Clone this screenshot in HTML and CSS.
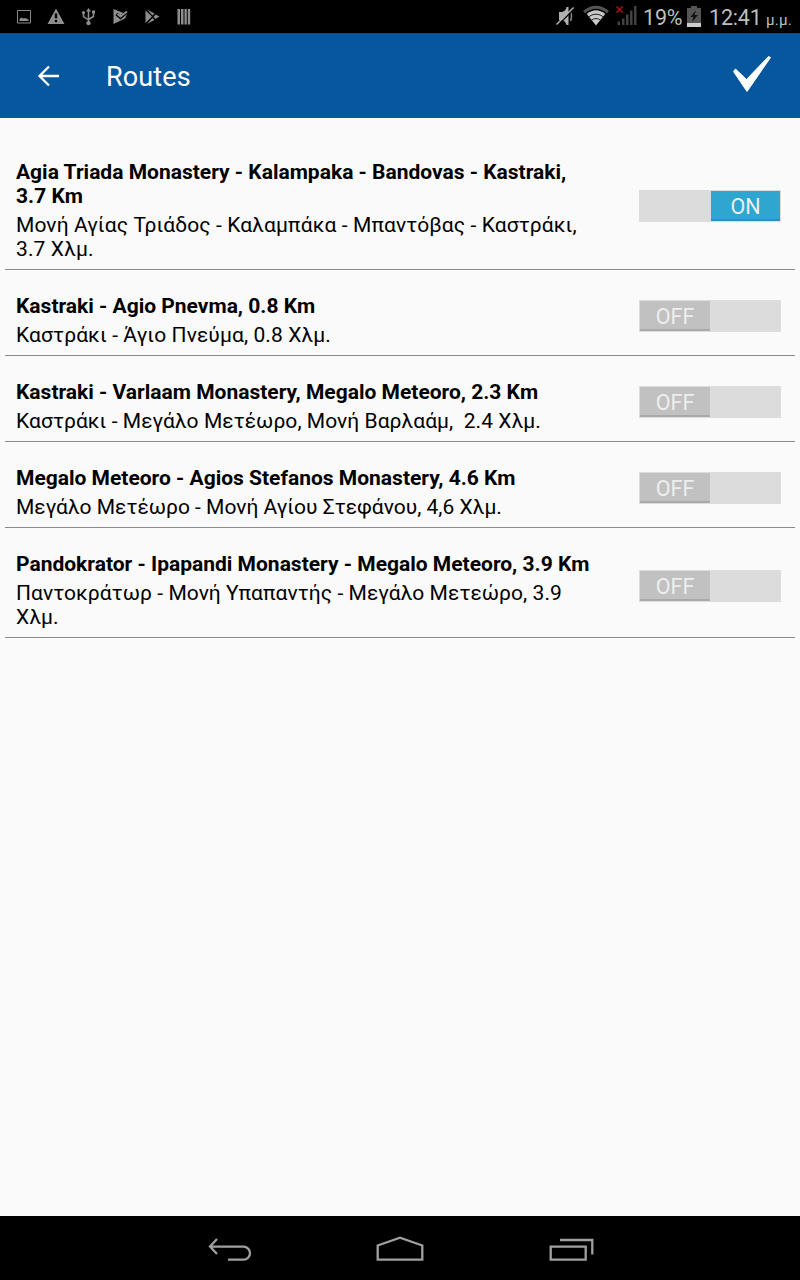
FILE: index.html
```html
<!DOCTYPE html>
<html lang="en">
<head>
  <meta charset="UTF-8" />
  <meta name="viewport" content="width=device-width, initial-scale=1.0" />
  <title>Routes</title>
  <link rel="stylesheet" href="styles.css">
</head>
<body>
  <div class="status-bar">
    <svg class="notifications" width="200" height="33" viewBox="0 0 200 33" fill="#8e8e8e">
      <path d="M17.500 10.500h13v12.500h-13z" fill="none" stroke="#8a8a8a" />
      <path d="M19.500 21v-2l2-1.500 2 1 1.500-.5 3.500 1.500v1.500z" />
      <path fill-rule="evenodd" d="M56 8.500L64.500 24h-17zM54.800 13.500v5h2.400v-5zM54.800 20v2.200h2.400V20z" />
      <g fill="none" stroke="#8e8e8e" stroke-width="1.500"><path d="M88.500 11v12M83.500 13v3.500l5 3.500M93.500 12.500v4l-5 3" /></g>
      <path d="M88.500 8l2.500 3.500h-5zM92 10.500h3v3h-3z" /><circle cx="83.500" cy="12.500" r="1.600" /><circle cx="88.500" cy="23.200" r="2.100" />
      <path d="M113.500 9L127 14.500 125 18.500 113.500 24z" />
      <path d="M116.500 14l4 3.500L127.500 11.500" fill="none" stroke="#000" stroke-width="3.200" />
      <path d="M117.500 14l3 2.500 6.500-5" fill="none" stroke="#8e8e8e" stroke-width="2" />
      <path d="M145.500 10.500l6.500 6-6.500 6.500zM147 9.500l7.500 4-2 2zM147 24l5.500-6 2 2zM155.500 14.500l4 2-4 2.500-2-2.200z" />
      <path d="M177.500 9h2.500v15.500h-2.500zM181 9h2.500v15.500H181zM184.500 9h2.300v15.500h-2.300zM187.800 9h2.400v15.500h-2.400z" />
    </svg>
    <div class="system">
      <svg width="84" height="33" viewBox="554 0 84 33">
        <path d="M559 12h3q4-1 4.500-5h2v18h-2q-1-4-4.500-5h-3z" fill="#b0b0b0" />
        <path d="M570.500 11q2 5 0 10" fill="none" stroke="#888" stroke-width="1.500" />
        <path d="M557 26L574 9" stroke="#000" stroke-width="1.500" /><path d="M556.500 24.500L573.500 7.500" stroke="#b5b5b5" stroke-width="1.500" />
        <path d="M584 12.200Q596 2.200 608 12.200" fill="none" stroke="#555" stroke-width="3" />
        <path d="M586.800 14Q596 6.500 605.200 14L596 25.500z" fill="#cacaca" />
        <path d="M588 17.200Q596 11 604 17.200M591 20.500Q596 16.500 601 20.500" fill="none" stroke="#222" stroke-width="1" />
        <path d="M617.500 21.500h2.500V25h-2.500zM622 18.500h2.500V25H622zM626 14.500h2.500V25H626zM630 10.500h2.500V25H630zM634 6h2.500v19H634z" fill="#424242" />
        <path d="M616.500 6.500l6 6m0-6l-6 6" stroke="#a01515" stroke-width="1.700" />
      </svg>
      <span class="percent">19%</span>
      <svg class="battery" width="14" height="21" viewBox="0 0 14 21">
        <path d="M4 0h6v2h4v19H0V2h4z" fill="#555" /><path d="M0 17h14v4H0z" fill="#ccc" />
        <path d="M9 4L3.500 11h3L5 16l6-7H7.500z" fill="#111" />
      </svg>
      <span class="clock">12:41</span>
      <span class="meridiem">μ.μ.</span>
    </div>
  </div>

  <div class="header">
    <svg class="back" width="24" height="24" viewBox="0 0 24 24" fill="none" stroke="#fff" stroke-width="2.300"><path d="M23 12H3.500M13 2.500L3.500 12l9.500 9.500" /></svg>
    <h1>Routes</h1>
    <svg class="check" width="42" height="40" viewBox="0 0 42 40"><path d="M3.500 17.500L5.500 15l11 10.500L38.500 2.500l2 1L17 37.500z" fill="#fff" stroke="#fff" stroke-linejoin="round" /></svg>
  </div>

  <div class="routes">
    <div class="route">
      <div class="names">
        <div class="title">Agia Triada Monastery - Kalampaka - Bandovas - Kastraki,<br>3.7 Km</div>
        <div class="subtitle wide">Μονή Αγίας Τριάδος - Καλαμπάκα - Μπαντόβας - Καστράκι,<br>3.7 Χλμ.</div>
      </div>
      <div class="switch on"><span>ON</span></div>
    </div>
    <div class="route">
      <div class="names">
        <div class="title">Kastraki - Agio Pnevma, 0.8 Km</div>
        <div class="subtitle wide">Καστράκι - Άγιο Πνεύμα, 0.8 Χλμ.</div>
      </div>
      <div class="switch"><span>OFF</span></div>
    </div>
    <div class="route">
      <div class="names">
        <div class="title">Kastraki - Varlaam Monastery, Megalo Meteoro, 2.3 Km</div>
        <div class="subtitle">Καστράκι - Μεγάλο Μετέωρο, Μονή Βαρλαάμ,&nbsp; 2.4 Χλμ.</div>
      </div>
      <div class="switch"><span>OFF</span></div>
    </div>
    <div class="route">
      <div class="names">
        <div class="title">Megalo Meteoro - Agios Stefanos Monastery, 4.6 Km</div>
        <div class="subtitle tight">Μεγάλο Μετέωρο - Μονή Αγίου Στεφάνου, 4,6 Χλμ.</div>
      </div>
      <div class="switch"><span>OFF</span></div>
    </div>
    <div class="route">
      <div class="names">
        <div class="title">Pandokrator - Ipapandi Monastery - Megalo Meteoro, 3.9 Km</div>
        <div class="subtitle">Παντοκράτωρ - Μονή Υπαπαντής - Μεγάλο Μετεώρο, 3.9<br>Χλμ.</div>
      </div>
      <div class="switch"><span>OFF</span></div>
    </div>
  </div>

  <div class="nav-bar">
    <svg width="400" height="64" viewBox="200 0 400 64" fill="none" stroke="#a0a0a0" stroke-width="2.300">
      <path d="M217 23l-7 7.500 7 7.500M210.500 30.700H243.500a6.500 6.500 0 0 1 0 13H228" />
      <path d="M377.700 43.700V29.500L400 21.700l22.300 7.800v14.200z" />
      <path d="M550.700 30.700h35v13h-35zM560 24h32.300v14.500" />
    </svg>
  </div>
</body>
</html>
```
FILE: styles.css
```css
body {
  font-family: Roboto, "Noto Sans", sans-serif;
  margin: 0;
  height: 1280px;
  display: flex;
  flex-direction: column;
  background: #fafafa;
  color: #000;
}
svg {
  display: block;
  flex-shrink: 0;
}
.status-bar {
  height: 33px;
  background: #000;
  color: #bebebe;
  display: flex;
  justify-content: space-between;
}
.system {
  display: flex;
  width: 246px;
  white-space: nowrap;
  line-height: 35px;
  font-size: 21.5px;
}
.percent {
  width: 44px;
  margin-left: 5px;
  letter-spacing: -0.2px;
}
.battery {
  margin-top: 6px;
}
.clock {
  width: 53px;
  margin-left: 8px;
  letter-spacing: -0.2px;
}
.meridiem {
  font-size: 15px;
  line-height: 40px;
  margin-left: 4px;
  letter-spacing: 0.3px;
}
.header {
  height: 85px;
  background: #07579f;
  border-top: 1px solid #174a80;
  box-sizing: border-box;
  color: #fff;
  display: flex;
  align-items: center;
}
.back {
  margin-left: 36px;
}
h1 {
  margin: 2px 0 0 46px;
  font-size: 27px;
  font-weight: 400;
  letter-spacing: 0.15px;
  flex: 1;
}
.check {
  margin-right: 28px;
  margin-bottom: 4px;
}
.routes {
  flex: 1;
  padding: 18px 5px 0;
}
.route {
  display: flex;
  align-items: center;
  justify-content: space-between;
  padding: 24px 14px 8px 11px;
  border-bottom: 1px solid #8c8c8c;
}
.names {
  font-size: 21px;
  line-height: 24px;
  white-space: nowrap;
}
.title {
  font-weight: 700;
  margin-bottom: 5px;
}
.subtitle {
  letter-spacing: 0.05px;
}
.subtitle.wide {
  letter-spacing: 0.1px;
}
.subtitle.tight {
  letter-spacing: 0;
}
.switch {
  width: 142px;
  height: 32px;
  padding: 1px;
  box-sizing: border-box;
  background: #dcdcdc;
  display: flex;
  margin-top: -10px;
}
.switch span {
  width: 70px;
  height: 30px;
  box-sizing: border-box;
  border-bottom: 2px solid #a9a9a9;
  background: #c1c1c1;
  color: #eee;
  font-size: 21.5px;
  line-height: 31px;
  text-align: center;
}
.switch.on {
  justify-content: flex-end;
}
.switch.on span {
  width: 69px;
  background: #2fa6d0;
  border-color: #2993b9;
}
.nav-bar {
  height: 64px;
  background: #000;
  display: flex;
  justify-content: center;
}
```
